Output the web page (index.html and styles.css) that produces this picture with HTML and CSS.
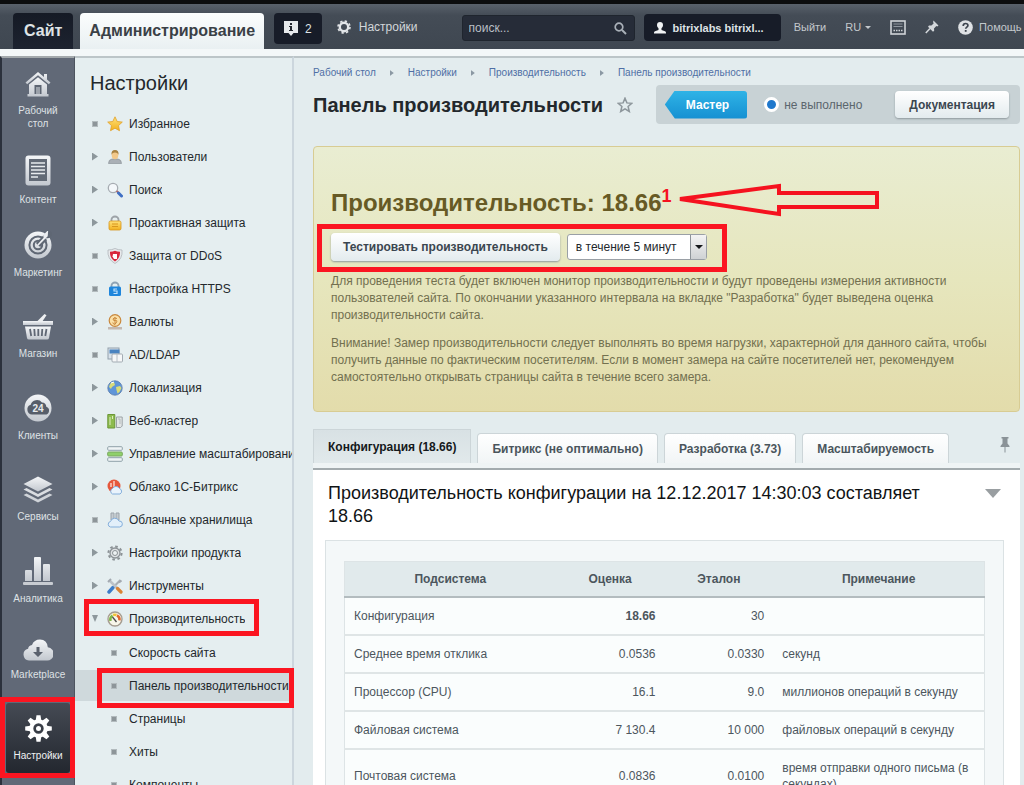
FILE: index.html
```html
<!DOCTYPE html>
<html lang="ru">
<head>
<meta charset="utf-8">
<title>Панель производительности</title>
<link rel="stylesheet" href="styles.css">
</head>
<body>
<svg class="defs" width="0" height="0" aria-hidden="true">
  <defs>
    <linearGradient id="silver" x1="0" y1="0" x2="0" y2="1"><stop offset="0" stop-color="#f4f6f8"/><stop offset="1" stop-color="#c3c8cf"/></linearGradient>
    <linearGradient id="gold" x1="0" y1="0" x2="0" y2="1"><stop offset="0" stop-color="#ffe27a"/><stop offset="1" stop-color="#f2b01e"/></linearGradient>
  </defs>
</svg>
<div class="app">
  <header class="topbar">
    <nav class="modes">
      <a class="mode mode--site" href="#">Сайт</a>
      <a class="mode mode--admin" href="#">Администрирование</a>
    </nav>
    <button class="notice" type="button">
      <svg width="14" height="15" viewBox="0 0 14 15"><path d="M0 0h14v12H9.500l-2.500 3-2.500-3H0z" fill="#e6e9ec"/><path d="M6 2h2v2H6zM5 5h3v4h1v1H5V9h1V6H5z" fill="#23272f"/></svg>
      <span>2</span>
    </button>
    <a class="toplink toplink--settings" href="#">
      <svg width="14" height="14" viewBox="0 0 14 14"><circle cx="7" cy="7" r="4.200" fill="none" stroke="#e2e5e8" stroke-width="2.400"/><circle cx="7" cy="7" r="6" fill="none" stroke="#e2e5e8" stroke-width="1.600" stroke-dasharray="2.360 2.352"/></svg>
      <span>Настройки</span>
    </a>
    <label class="search">
      <input class="search-input" type="text" placeholder="поиск..." aria-label="поиск">
      <svg width="13" height="13" viewBox="0 0 13 13"><circle cx="5" cy="5" r="3.800" fill="none" stroke="#a9b0b8" stroke-width="1.700"/><path d="M8 8l4 4" stroke="#a9b0b8" stroke-width="2"/></svg>
    </label>
    <a class="user" href="#">
      <svg width="12" height="12" viewBox="0 0 12 12"><path d="M6 0c2 0 3 1.300 3 3 0 1.500-.7 2.500-1.500 3.200V8l3.500 1.300c.7.300 1 .8 1 1.700v.5H0V11c0-.9.3-1.400 1-1.700L4.500 8V6.200C3.700 5.500 3 4.500 3 3c0-1.700 1-3 3-3z" fill="#f0f2f4"/></svg>
      <span>bitrixlabs bitrixl...</span>
    </a>
    <div class="toplinks">
      <a class="toplink" href="#">Выйти</a>
      <a class="toplink toplink--lang" href="#">RU <svg width="6" height="3" viewBox="0 0 6 3"><path d="M0 0h6L3 3z" fill="#c3c8cc"/></svg></a>
      <button class="icon-btn" type="button" aria-label="Панель"><svg width="16" height="15" viewBox="0 0 16 15"><rect x="1" y="1" width="14" height="13" fill="none" stroke="#d0d4d8" stroke-width="1.600"/><path d="M3.500 4h9M3.500 6.500h9" stroke="#8f969e" stroke-width="1"/><path d="M3.500 10.500h9" stroke="#d0d4d8" stroke-width="1.500" stroke-dasharray="1.500 1"/></svg></button>
      <button class="icon-btn" type="button" aria-label="Закрепить"><svg width="14" height="14" viewBox="0 0 14 14"><path d="M8.500 0.500l5 5-1.200.9-1-.3-2.300 2.300.2 2.300-1.200 1L3 6.700l1-1.200 2.400.1 2.200-2.200-.5-1.300z" fill="#d3d7db"/><path d="M5 8.500L.8 13" stroke="#d3d7db" stroke-width="1.500"/></svg></button>
      <a class="toplink toplink--help" href="#">
        <svg width="15" height="15" viewBox="0 0 15 15"><circle cx="7.500" cy="7.500" r="7.300" fill="#dfe2e5"/><path d="M5.200 5.900c0-1.600 1-2.400 2.400-2.400s2.300.8 2.300 2c0 1.600-2.200 1.700-2.200 3.300" fill="none" stroke="#3d444e" stroke-width="1.700"/><rect x="6.800" y="10" width="1.800" height="1.800" fill="#3d444e"/></svg>
        <span>Помощь</span>
      </a>
    </div>
  </header>

  <div class="body">
    <nav class="rail">
      <a class="rail-item rail-item--tight" href="#">
        <svg width="28" height="26" viewBox="0 0 28 26"><path d="M14 1L1.500 11.500l1.700 1.700L14 4.300l10.800 8.900 1.700-1.700-3.500-3V3h-3v3z" fill="url(#silver)"/><path d="M5 13.500L14 6.200l9 7.300V23h1.500v2.500h-21V23H5z" fill="url(#silver)"/><path d="M10.500 14h7v9h-7z" fill="#5d6572"/><path d="M12 16h4v7h-4z" fill="#9ba1aa"/></svg>
        <span>Рабочий стол</span>
      </a>
      <a class="rail-item rail-item--tight" href="#">
        <svg width="26" height="31" viewBox="0 0 26 31"><rect x=".5" y=".5" width="25" height="30" rx="3" fill="url(#silver)"/><rect x="4" y="4" width="18" height="22" fill="#626a76"/><path d="M6 8h14M6 11.500h14M6 15h14M6 18.500h14M6 22h7" stroke="#e8ebee" stroke-width="1.600"/></svg>
        <span>Контент</span>
      </a>
      <a class="rail-item" href="#">
        <svg width="28" height="28" viewBox="0 0 28 28"><circle cx="14" cy="14" r="13.500" fill="url(#silver)"/><circle cx="14" cy="14" r="8.600" fill="none" stroke="#5f6774" stroke-width="2"/><circle cx="14" cy="14" r="4.200" fill="none" stroke="#5f6774" stroke-width="2"/><path d="M14 14L27 1" stroke="#5f6774" stroke-width="6"/><path d="M14 14l9-9 .3-4L20 4.500l.4 2.600z" fill="#eceef1" stroke="#eceef1" stroke-width="1.500"/><path d="M21 7.500l5-.5-2 2.500z" fill="#eceef1"/></svg>
        <span>Маркетинг</span>
      </a>
      <a class="rail-item" href="#">
        <svg width="32" height="27" viewBox="0 0 32 27"><path d="M1 8h30v4H1z" fill="url(#silver)"/><path d="M15 8.500L22.500 1l2 1.300L20 9z" fill="#eef0f2"/><path d="M3 13.500h26l-2 11.500q-.3 1.500-2 1.500H7q-1.700 0-2-1.500z" fill="url(#silver)"/><path d="M8 16l1.200 7M12.300 16l.5 7M16.300 16v7M20.300 16l-.5 7M24.500 16l-1.200 7" stroke="#5f6774" stroke-width="1.800"/></svg>
        <span>Магазин</span>
      </a>
      <a class="rail-item" href="#">
        <svg width="28" height="28" viewBox="0 0 28 28"><circle cx="14" cy="14" r="13.500" fill="url(#silver)"/><path d="M8 20.500a5 5 0 0 1-1.300-9.700A6.500 6.500 0 0 1 18 8.500a4.500 4.500 0 0 1 4.300 4.200A4 4 0 0 1 21 20.500z" fill="#575e6a"/><text x="14" y="18" text-anchor="middle" class="badge24">24</text></svg>
        <span>Клиенты</span>
      </a>
      <a class="rail-item" href="#">
        <svg width="30" height="27" viewBox="0 0 30 27"><path d="M15 .5L29.500 8 15 15.500.5 8z" fill="url(#silver)"/><path d="M.5 13.500l3-1.600L15 18l11.500-6.100 3 1.600L15 21z" fill="#dadde1"/><path d="M.5 19l3-1.600L15 23.500l11.500-6.100 3 1.600L15 26.500z" fill="#cfd3d8"/></svg>
        <span>Сервисы</span>
      </a>
      <a class="rail-item" href="#">
        <svg width="30" height="28" viewBox="0 0 30 28"><path d="M2 14q0-1 1-1h5q1 0 1 1v10H2zM11 1q0-1 1-1h5q1 0 1 1v23h-7zM20 8q0-1 1-1h5q1 0 1 1v16h-7z" fill="url(#silver)"/><rect x="0" y="25" width="30" height="3" rx="1" fill="#c8ccd2"/></svg>
        <span>Аналитика</span>
      </a>
      <a class="rail-item" href="#">
        <svg width="30" height="22" viewBox="0 0 30 22"><path d="M6 21.500a6 6 0 0 1-.9-11.800Q5.500 6.500 9 6q2-5.500 8-5.500 7 0 7.800 7.800A6.500 6.500 0 0 1 23.500 21.500z" fill="url(#silver)"/><path d="M13.500 8h3v5h3.500l-5 5-5-5h3.500z" fill="#5a616d"/></svg>
        <span>Marketplace</span>
      </a>
      <a class="rail-item rail-item--active" href="#">
        <svg width="27" height="27" viewBox="-13.500 -13.500 27 27"><g fill="#fff"><path id="tooth" d="M-2.800-8l.8-5.300h4l.8 5.300z"/><use href="#tooth" transform="rotate(45)"/><use href="#tooth" transform="rotate(90)"/><use href="#tooth" transform="rotate(135)"/><use href="#tooth" transform="rotate(180)"/><use href="#tooth" transform="rotate(225)"/><use href="#tooth" transform="rotate(270)"/><use href="#tooth" transform="rotate(315)"/></g><circle r="7.200" fill="none" stroke="#fff" stroke-width="4"/><circle r="2.500" fill="#fff"/></svg>
        <span>Настройки</span>
        <i class="mark mark--rail"></i>
      </a>
    </nav>

    <aside class="menu">
      <h2 class="menu-title">Настройки</h2>
      <ul class="tree">
        <li><a class="node" href="#"><i class="dot"></i><svg width="16" height="16" viewBox="0 0 16 16"><path d="M8 .8l2.200 4.700 5.100.6-3.800 3.500 1 5.100L8 12.200l-4.500 2.500 1-5.100L.7 6.100l5.100-.6z" fill="url(#gold)" stroke="#e0a02a" stroke-width=".8"/></svg><span>Избранное</span></a></li>
        <li><a class="node" href="#"><i class="arrow"></i><svg width="16" height="16" viewBox="0 0 16 16"><path d="M1.500 14.500q0-4 3.500-4.500h6q3.500.5 3.500 4.500z" fill="#aab0b6" stroke="#858c92" stroke-width=".6"/><ellipse cx="8" cy="6" rx="3.300" ry="4.300" fill="#f2c88a"/><path d="M4.500 6Q4 1 8 1t3.500 5Q11 3.500 8 3.500T4.500 6z" fill="#a88242"/></svg><span>Пользователи</span></a></li>
        <li><a class="node" href="#"><i class="arrow"></i><svg width="16" height="16" viewBox="0 0 16 16"><circle cx="6" cy="6" r="4.700" fill="#f4f8fb" stroke="#a6acb2" stroke-width="1.300"/><path d="M9.500 9l3 2.500" stroke="#b06a6a" stroke-width="2"/><path d="M11.500 11l3 3" stroke="#3f6fc4" stroke-width="3" stroke-linecap="round"/></svg><span>Поиск</span></a></li>
        <li><a class="node" href="#"><i class="arrow"></i><svg width="16" height="16" viewBox="0 0 16 16"><path d="M4.500 7V4.500a3.500 3 0 0 1 7 0V7" fill="none" stroke="#9da3a8" stroke-width="1.800"/><rect x="2" y="6" width="12" height="9" rx="1.500" fill="url(#gold)" stroke="#d7941c" stroke-width=".8"/><path d="M5 9h6M5 11.500h6" stroke="#d9971f"/></svg><span>Проактивная защита</span></a></li>
        <li><a class="node" href="#"><i class="dot"></i><svg width="16" height="16" viewBox="0 0 16 16"><path d="M8 .5q3 1.500 7 1.500 1 9-7 13.500Q0 11 1 2q4 0 7-1.500z" fill="#e8eaec" stroke="#b0b5ba" stroke-width=".8"/><path d="M8 2.800q2 1 5 1 .3 6.500-5 9.700-5.300-3.200-5-9.700 3 0 5-1z" fill="#d8283c"/><path d="M6 6h4v5H7L5.500 8.500z" fill="#fff"/></svg><span>Защита от DDoS</span></a></li>
        <li><a class="node" href="#"><i class="dot"></i><svg width="16" height="16" viewBox="0 0 16 16"><path d="M4.500 7V4.500a3.500 3 0 0 1 7 0V7" fill="none" stroke="#8fa3b4" stroke-width="1.800"/><rect x="2" y="5.500" width="12" height="9.500" rx="1.500" fill="#1f86dc"/><path d="M10 8H7v2h3v2.500H6.500" fill="none" stroke="#bfe0fb" stroke-width="1.200"/></svg><span>Настройка HTTPS</span></a></li>
        <li><a class="node" href="#"><i class="arrow"></i><svg width="16" height="16" viewBox="0 0 16 16"><path d="M1 13h14v2.500H1z" fill="#c4b9b0"/><circle cx="8" cy="6.500" r="5.800" fill="#fbe0a8" stroke="#c9883d" stroke-width="1.200"/><path d="M10 4.500q-4-1.500-4 .5t2.500 1.500T9 9 5.800 8.500M8 3v7.500" fill="none" stroke="#c9883d"/></svg><span>Валюты</span></a></li>
        <li><a class="node" href="#"><i class="dot"></i><svg width="16" height="16" viewBox="0 0 16 16"><rect x="1" y="1" width="11" height="11" fill="#d9e2ea" stroke="#93a0ac"/><rect x="2.500" y="2.500" width="10" height="4" fill="#4a83c0"/><rect x="5" y="7" width="10.500" height="8" rx="1" fill="#f6f7f8" stroke="#a3abb3"/><path d="M10 7v8" stroke="#b7bec5"/></svg><span>AD/LDAP</span></a></li>
        <li><a class="node" href="#"><i class="arrow"></i><svg width="16" height="16" viewBox="0 0 16 16"><circle cx="8" cy="8" r="7.200" fill="#5f95d8" stroke="#5779a8" stroke-width=".8"/><path d="M3 4q2-2.500 4-2l1 3-3 2-1 2-2-2zM9 7l4-1 1.500 2-2 4-2 1.500-1-3.500z" fill="#d9dc7a"/><path d="M4 3l3-1" stroke="#fff"/></svg><span>Локализация</span></a></li>
        <li><a class="node" href="#"><i class="arrow"></i><svg width="16" height="16" viewBox="0 0 16 16"><path d="M.8 1.500h7v13.500h-7z" fill="#8dbb4e" stroke="#6b9637"/><path d="M3 4v8M5.500 3v3" stroke="#dcedc0"/><path d="M9.500 4h5.700v9l-1.500 1.500H9.500z" fill="#e2e6e6" stroke="#9ba2a6"/><path d="M11 6h2v5" fill="none" stroke="#b3b9bc"/></svg><span>Веб-кластер</span></a></li>
        <li><a class="node" href="#"><i class="arrow"></i><svg width="16" height="16" viewBox="0 0 16 16"><rect x=".7" y=".7" width="14.600" height="3.600" rx="1" fill="#eff4f5" stroke="#8fa1a8"/><rect x=".7" y="6" width="14.600" height="4" rx="1" fill="#8fd06a" stroke="#7aa860"/><rect x=".7" y="11.700" width="14.600" height="3.600" rx="1" fill="#eff4f5" stroke="#8fa1a8"/></svg><span>Управление масштабированием</span></a></li>
        <li><a class="node" href="#"><i class="arrow"></i><svg width="16" height="16" viewBox="0 0 16 16"><circle cx="7" cy="7" r="6.500" fill="#e5573c"/><path d="M7 2v6M4 4v4" stroke="#fbd0c2" stroke-width="1.500"/><path d="M5.500 15a3 3 0 0 1 0-5.500 4 4 0 0 1 7 0A3 3 0 0 1 13 15z" fill="#e9f3fc" stroke="#83aedb"/></svg><span>Облако 1С-Битрикс</span></a></li>
        <li><a class="node" href="#"><i class="dot"></i><svg width="16" height="16" viewBox="0 0 16 16"><path d="M4 1h3v7H4zM9 1h3v7H9z" fill="#c5cbd0" stroke="#9aa3aa"/><path d="M3.500 15a2.800 2.800 0 0 1 0-5.500 4.500 4.500 0 0 1 8.500-.5 3 3 0 0 1 .7 6z" fill="#e2effa" stroke="#83aedb"/></svg><span>Облачные хранилища</span></a></li>
        <li><a class="node" href="#"><i class="arrow"></i><svg width="16" height="16" viewBox="0 0 16 16"><circle cx="8" cy="8" r="6.600" fill="none" stroke="#8c9296" stroke-width="2" stroke-dasharray="2.600 2.580"/><circle cx="8" cy="8" r="5" fill="#dfe2e4" stroke="#8c9296" stroke-width="1.300"/><circle cx="8" cy="8" r="2.500" fill="#eef2f3" stroke="#8c9296"/></svg><span>Настройки продукта</span></a></li>
        <li><a class="node" href="#"><i class="arrow"></i><svg width="16" height="16" viewBox="0 0 16 16"><path d="M13.500 2L5 10.500" stroke="#a9afb5" stroke-width="2.200"/><path d="M6 9.500l-4 4.500" stroke="#3c7cc8" stroke-width="3.400" stroke-linecap="round"/><path d="M3 3l8 8" stroke="#bcc2c8" stroke-width="2.500"/><path d="M1 4l3-3M12 4.500l2.500-2" stroke="#a3a9b0" stroke-width="2"/><path d="M10.500 10.500l3.500 3.500" stroke="#d98335" stroke-width="3.200" stroke-linecap="round"/></svg><span>Инструменты</span></a></li>
        <li>
          <a class="node node--open" href="#"><i class="arrow arrow--down"></i><svg width="16" height="16" viewBox="0 0 16 16"><circle cx="8" cy="8" r="7" fill="#f8f6ea" stroke="#a59c90" stroke-width="1.400"/><path d="M3.500 10a5 5 0 0 1 2-5.500" fill="none" stroke="#7fb648" stroke-width="2.500"/><path d="M6 4a5 5 0 0 1 3.500 0" fill="none" stroke="#f0c33a" stroke-width="2.500"/><path d="M10 4.300a5 5 0 0 1 2.500 5" fill="none" stroke="#e0672e" stroke-width="2.500"/><path d="M5.500 6l4 5" stroke="#4c4c4c" stroke-width="1.300"/></svg><span>Производительность</span><i class="mark mark--node"></i></a>
          <ul class="subtree">
            <li><a class="leaf" href="#"><i class="dot"></i><span>Скорость сайта</span></a></li>
            <li><a class="leaf leaf--current" href="#"><i class="dot"></i><span>Панель производительности</span><i class="mark mark--leaf"></i></a></li>
            <li><a class="leaf" href="#"><i class="dot"></i><span>Страницы</span></a></li>
            <li><a class="leaf" href="#"><i class="dot"></i><span>Хиты</span></a></li>
            <li><a class="leaf" href="#"><i class="dot"></i><span>Компоненты</span></a></li>
          </ul>
        </li>
      </ul>
    </aside>

    <main class="content">
      <nav class="crumbs">
        <a href="#">Рабочий стол</a><i class="sep"></i><a href="#">Настройки</a><i class="sep"></i><a href="#">Производительность</a><i class="sep"></i><a href="#">Панель производительности</a>
      </nav>
      <div class="heading">
        <h1 class="title">Панель производительности</h1>
        <button class="icon-btn fav" type="button" aria-label="В избранное"><svg width="16" height="16" viewBox="0 0 16 16"><path d="M8 1.200l1.900 4.700 4.900.4-3.700 3.200 1.200 5L8 11.800l-4.300 2.700 1.200-5L1.200 6.300l4.900-.4z" fill="none" stroke="#8d969b" stroke-width="1.500"/></svg></button>
        <div class="context">
          <button class="wizard" type="button">Мастер</button>
          <label class="status"><input class="status-radio" type="radio" checked><span>не выполнено</span></label>
          <button class="btn btn--docs" type="button">Документация</button>
        </div>
      </div>

      <section class="score">
        <h2 class="score-title">Производительность: 18.66<sup>1</sup>
          <svg class="pointer" width="206" height="34" viewBox="0 0 206 34" aria-hidden="true"><path d="M4 16L103 3v7h98v14h-98v7z" fill="none" stroke="#f5121f" stroke-width="4"/></svg>
        </h2>
        <form class="run">
          <button class="btn btn--run" type="button">Тестировать производительность</button>
          <span class="select-wrap">
            <select class="select" aria-label="Длительность"><option>в течение 5 минут</option></select>
            <i class="select-arrow"></i>
          </span>
          <i class="mark mark--run"></i>
        </form>
        <p>Для проведения теста будет включен монитор производительности и будут проведены измерения активности пользователей сайта. По окончании указанного интервала на вкладке "Разработка" будет выведена оценка производительности сайта.</p>
        <p>Внимание! Замер производительности следует выполнять во время нагрузки, характерной для данного сайта, чтобы получить данные по фактическим посетителям. Если в момент замера на сайте посетителей нет, рекомендуем самостоятельно открывать страницы сайта в течение всего замера.</p>
      </section>

      <div class="tabs">
        <button class="tab tab--active" type="button">Конфигурация (18.66)</button>
        <button class="tab" type="button">Битрикс (не оптимально)</button>
        <button class="tab" type="button">Разработка (3.73)</button>
        <button class="tab" type="button">Масштабируемость</button>
        <button class="icon-btn tabs-pin" type="button" aria-label="Закрепить"><svg width="10" height="16" viewBox="0 0 10 16"><path d="M1.500 0h7v1.500H7.500v5L9.500 9v1h-4v5.500h-1V10h-4V9l2-2.500v-5h-1z" fill="#8a9297"/></svg></button>
      </div>
      <section class="panel">
        <div class="panel-head">
          <h3 class="panel-title">Производительность конфигурации на 12.12.2017 14:30:03 составляет 18.66</h3>
          <button class="icon-btn" type="button" aria-label="Свернуть"><svg width="16" height="9" viewBox="0 0 16 9"><path d="M0 0h16L8 9z" fill="#999ea1"/></svg></button>
        </div>
        <div class="sheet">
          <table class="grid">
            <colgroup><col class="c-name"><col class="c-score"><col class="c-ref"><col class="c-note"></colgroup>
            <thead><tr><th>Подсистема</th><th>Оценка</th><th>Эталон</th><th>Примечание</th></tr></thead>
            <tbody>
              <tr><td>Конфигурация</td><td class="num"><b>18.66</b></td><td class="num">30</td><td></td></tr>
              <tr><td>Среднее время отклика</td><td class="num">0.0536</td><td class="num">0.0330</td><td>секунд</td></tr>
              <tr><td>Процессор (CPU)</td><td class="num">16.1</td><td class="num">9.0</td><td>миллионов операций в секунду</td></tr>
              <tr><td>Файловая система</td><td class="num">7 130.4</td><td class="num">10 000</td><td>файловых операций в секунду</td></tr>
              <tr><td>Почтовая система</td><td class="num">0.0836</td><td class="num">0.0100</td><td>время отправки одного письма (в секундах)</td></tr>
            </tbody>
          </table>
        </div>
      </section>
    </main>
  </div>
</div>
</body>
</html>
```
FILE: styles.css
```css
* { box-sizing: border-box; }
body { margin: 0; font: 12px/16px "Liberation Sans", Arial, sans-serif; color: #23282c; background: #e3ecee; }
a { color: inherit; text-decoration: none; }
ul { list-style: none; margin: 0; padding: 0; }
h1, h2, h3, p { margin: 0; }
button, input, select { font: inherit; color: inherit; margin: 0; }
svg { display: block; flex: none; }
.defs { position: absolute; }
.app { display: flex; flex-direction: column; height: 100vh; overflow: hidden; }

.topbar { display: flex; align-items: flex-end; flex: none; height: 49px; padding-left: 13px; border-top: 4px solid #0c0d0e; background: linear-gradient(#59616b, #444c56 25%, #3f4751); overflow: hidden; white-space: nowrap; font-size: 11px; color: #c3c8cc; }
.modes { display: flex; gap: 7px; font-size: 16px; font-weight: bold; }
.mode { display: flex; align-items: center; height: 36px; border-radius: 4px 4px 0 0; }
.mode--site { padding: 0 11px; background: linear-gradient(#151a25, #1d2330); color: #dfe3e6; }
.mode--admin { padding: 0 9px; background: linear-gradient(#fbfdfd, #e9f0f2); color: #3a4046; }
.notice { display: flex; align-items: center; gap: 7px; height: 31px; margin: 0 0 5px 10px; padding: 0 10px; border: 0; border-radius: 4px; background: #171c28; color: #dfe3e6; font-size: 12px; }
.toplink { display: flex; align-items: center; gap: 8px; height: 16px; }
.toplink--settings { margin: 0 44px 14px 15px; font-size: 12px; color: #d3d7da; }
.search { display: flex; align-items: center; flex: none; width: 173px; height: 26px; margin: 0 9px 8px 0; padding: 0 7px 0 6px; border: 1px solid #1f252e; border-radius: 3px; background: #262c38; }
.search-input { flex: 1; min-width: 0; padding: 0; border: 0; outline: 0; background: none; color: #c3c8cc; font-size: 12px; }
.search-input::placeholder { color: #b9bfc5; opacity: 1; }
.user { display: flex; align-items: center; gap: 7px; height: 27px; margin-bottom: 8px; padding: 0 17px 0 10px; border-radius: 4px; background: #171c28; color: #dfe3e6; font-weight: bold; }
.toplinks { display: flex; align-items: center; gap: 19px; height: 16px; margin: 0 0 14px 13px; }
.toplink--lang { gap: 4px; }
.toplink--help { gap: 6px; }
.icon-btn { padding: 0; border: 0; background: none; }

.body { display: flex; flex: 1; min-height: 0; border-top: 7px solid #f3f7f8; }
.rail { display: flex; flex-direction: column; flex: none; width: 75px; padding-top: 13px; border-top: 2px solid #a3a9ac; border-left: 2px solid #2b313c; border-right: 1px solid #4d545f; background: #616977; color: #dfe2e5; font-size: 10px; line-height: 13px; text-align: center; }
.rail-item { display: flex; flex-direction: column; align-items: center; flex: none; gap: 7px; padding: 0 14px 34px; }
.rail-item--tight { padding-bottom: 25px; }
.rail-item--active { position: relative; height: 70px; margin: -12px 4px 0; padding: 12px 0 0; border-radius: 3px; background: linear-gradient(#454a54, #23272f); color: #f0f2f4; }
.badge24 { font: bold 10px "Liberation Sans", Arial, sans-serif; fill: #e8ebee; }

.menu { flex: none; width: 219px; padding-top: 12px; border-top: 2px solid #bcc5c8; border-right: 2px solid #ccd6dd; background: #e5eef0; white-space: nowrap; }
.menu-title { padding-left: 15px; font-size: 20px; line-height: 26px; font-weight: normal; }
.tree { padding-top: 11px; }
.node, .leaf { position: relative; display: flex; align-items: center; height: 33px; }
.node { padding-left: 17px; }
.node span { overflow: hidden; }
.node svg { margin: 0 6px 0 9px; }
.leaf { padding-left: 36px; }
.leaf .dot { margin-right: 12px; }
.leaf--current { background: linear-gradient(#e5eef0 1px, #cfd9dc 1px, #cfd9dc 32px, #e5eef0 32px); }
.subtree { padding-top: 1px; }
.dot { flex: none; width: 6px; height: 6px; border: 1px solid #b2babd; background: #8d9599; }
.arrow { flex: none; width: 6px; height: 8px; background: #8d979c; clip-path: polygon(0 0, 100% 50%, 0 100%); }
.arrow--down { height: 7px; clip-path: polygon(0 0, 100% 0, 50% 100%); }

/* red outlines drawn over the controls they point at */
.mark { position: absolute; border: 5px solid #fb1521; pointer-events: none; z-index: 2; }
.mark--rail { inset: -6px -5px -5px -6px; }
.mark--node { left: 9px; width: 175px; top: -3px; bottom: -1px; }
.mark--leaf { left: 22px; right: -2px; top: -1px; bottom: -6px; }
.mark--run { left: -14px; right: -20px; top: -9px; bottom: -11px; }

.content { flex: 1; min-width: 0; padding: 7px 4px 0 19px; border-top: 2px solid #bcc5c8; }
.crumbs { display: flex; align-items: center; font-size: 10px; color: #4f6fa5; }
.sep { width: 4px; height: 6px; margin: 0 14px; background: #8b98a3; clip-path: polygon(0 0, 100% 50%, 0 100%); }
.heading { display: flex; align-items: center; margin-top: 4px; }
.title { font-size: 20px; line-height: 26px; white-space: nowrap; }
.fav { margin-left: 14px; }
.context { display: flex; align-items: center; height: 39px; margin-left: auto; padding: 0 11px 0 9px; border-radius: 4px; background: #c8d2d5; }
.wizard { height: 28px; padding: 0 18px 0 21px; border: 0; border-radius: 3px; background: linear-gradient(#2fb3e6, #1590d2); clip-path: polygon(0 50%, 10px 0, 100% 0, 100% 100%, 10px 100%); color: #fff; font-weight: bold; }
.status { display: flex; align-items: center; gap: 5px; margin: 0 33px 0 17px; color: #5b666d; white-space: nowrap; }
.status-radio { appearance: none; width: 15px; height: 15px; border: 3px solid #fff; border-radius: 50%; background: #1f78cc; }
.btn { border: 0; border-radius: 4px; background: linear-gradient(#fff, #e3ebee); box-shadow: 0 1px 2px #8e989c; color: #3b4650; font-weight: bold; white-space: nowrap; }
.btn--docs { height: 27px; padding: 0 14px; }

.score { margin-top: 22px; padding: 40px 24px 25px 17px; border: 1px solid #d8cc93; border-radius: 4px; background: linear-gradient(#e9edd2, #e6e6bd 50%, #e3dcab); color: #72704f; line-height: 17px; }
.score-title { position: relative; display: inline-block; font-size: 24px; line-height: 32px; color: #675a25; white-space: nowrap; }
.score-title sup { font-size: 18px; line-height: 0; color: #f5121f; }
.pointer { position: absolute; left: 100%; top: -4px; margin-left: 4px; }
.run { position: relative; display: flex; align-items: center; gap: 7px; width: max-content; margin: 14px 0 12px; }
.btn--run { height: 28px; padding: 0 12px; }
.select-wrap { position: relative; }
.select { display: block; appearance: none; width: 140px; height: 26px; padding: 0 24px 0 8px; border: 1px solid #9aa0a6; border-radius: 3px; background: #fff; color: #23282c; }
.select-arrow { position: absolute; right: 1px; top: 1px; bottom: 1px; width: 16px; border-left: 1px solid #8d9398; background: linear-gradient(#f4f4f4, #cfd2d4); pointer-events: none; }
.select-arrow::after { content: ""; position: absolute; left: 4px; top: 10px; border: 4px solid transparent; border-top-color: #15181a; }
.score p + p { margin-top: 11px; }

.tabs { display: flex; align-items: flex-end; gap: 6px; margin-top: 17px; padding-bottom: 5px; border-bottom: 2px solid #a3abae; background: linear-gradient(#e3ecee 34px, #eff4f5 34px); }
.tab { height: 30px; padding: 0 14px; border: 1px solid #ccd5d8; border-bottom: 0; border-radius: 4px 4px 0 0; background: linear-gradient(#fff, #f1f5f6); color: #4a555c; font-weight: bold; white-space: nowrap; }
.tab--active { height: 34px; border-radius: 0; background: linear-gradient(#d8e1e4, #e1e9eb); color: #15191c; }
.tabs-pin { margin: 0 10px 10px auto; }
.panel { padding: 12px 16px 20px 12px; background: #fff; }
.panel-head { display: flex; align-items: flex-start; justify-content: space-between; gap: 50px; padding-left: 3px; }
.panel-title { font-size: 18px; line-height: 23px; font-weight: normal; color: #101315; }
.panel-head .icon-btn { margin-top: 7px; margin-right: 3px; }
.sheet { margin-top: 12px; padding: 20px 18px; border: 1px solid #dbe2e4; background: #f4f8f9; }
.grid { width: 100%; table-layout: fixed; border-collapse: collapse; border: 1px solid #dde4e6; background: #fafdfd; color: #4c565d; }
.c-name { width: 33%; }
.c-score { width: 17%; }
.c-ref { width: 17%; }
.c-note { width: 33%; }
.grid th { height: 35px; padding: 0; background: #e1eaec; border-bottom: 2px solid #b3bcbf; }
.grid td { height: 38px; padding: 10px 9px; border-bottom: 2px solid #dfe5e6; }
.grid .num { text-align: right; }
```
